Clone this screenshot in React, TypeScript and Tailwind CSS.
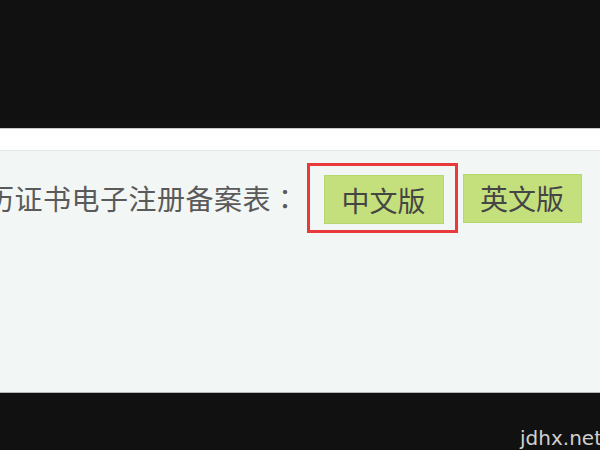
export default function App() {
  const cjk = { fontFamily: '"Noto Sans CJK SC", "Noto Sans", sans-serif' };

  return (
    <div className="w-[600px] h-[450px] flex flex-col overflow-hidden bg-[#111111]">
      {/* top dark band */}
      <div className="h-[128px] shrink-0 bg-[#111111]" />

      {/* white header strip */}
      <div className="h-[23px] shrink-0 bg-white border-t border-[#c9c9c9] border-b border-b-[#e3e8e7]" />

      {/* content area */}
      <div className="flex-1 bg-[#f2f6f5] pt-[12px]" style={cjk}>
        <div className="flex items-center">
          <span className="-ml-[14px] whitespace-nowrap text-[28px] leading-none text-[#5a5a5a] tracking-[0.5px]">
            历证书电子注册备案表
            <span style={{ fontFamily: '"Noto Sans CJK TC", "Noto Sans CJK SC", sans-serif' }}>：</span>
          </span>
          <div className="ml-[7px] w-[151px] h-[70px] border-[3px] border-[#e8393b] flex items-start pt-[9px] pl-[14px]">
            <button className="w-[120px] h-[49px] bg-[#c4e07c] border border-[#b5d76e] text-[28px] leading-none text-[#454545] flex items-center justify-center">
              中文版
            </button>
          </div>
          <button className="ml-[5px] w-[119px] h-[49px] bg-[#c4e07c] border border-[#b5d76e] text-[28px] leading-none text-[#454545] flex items-center justify-center">
            英文版
          </button>
        </div>
      </div>

      {/* bottom dark band with watermark */}
      <div className="h-[58px] shrink-0 bg-[#111111] border-t border-[#b5b5b5] flex items-end justify-end">
        <span
          className="text-[20px] leading-none text-[#d0d0d0] -mr-[2px] mb-[2px]"
          style={{ fontFamily: '"DejaVu Sans", sans-serif' }}
        >
          jdhx.net
        </span>
      </div>
    </div>
  );
}
